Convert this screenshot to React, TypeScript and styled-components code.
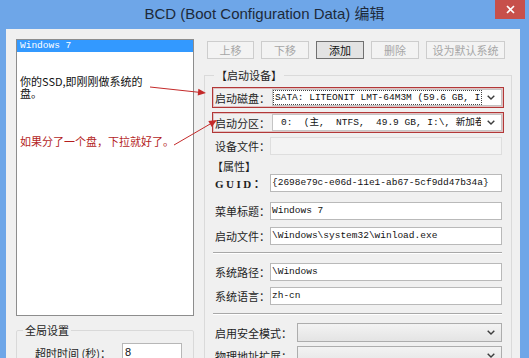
import React from 'react'
import styled, { createGlobalStyle } from 'styled-components'

const GlobalStyle = createGlobalStyle`
  html, body {
    margin: 0;
    padding: 0;
    background: #6ea6e8;
  }
  * {
    box-sizing: border-box;
  }
`

const CJK = `"Noto Sans CJK SC", sans-serif`
const MONO = `"Liberation Mono", "Noto Sans CJK SC", monospace`

export default function App() {
  return (
    <>
      <GlobalStyle />
      <Window>
        <TitleBar>
          <Title>BCD (Boot Configuration Data) 编辑</Title>
          <CloseButton aria-label="关闭">
            <svg width="9" height="9" viewBox="0 0 9 9">
              <path d="M1 1 L8 8 M8 1 L1 8" stroke="#fff" strokeWidth="1.6" />
            </svg>
          </CloseButton>
        </TitleBar>

        <Frame>
          <Body>
            <LeftColumn>
              <ListBox>
                <ListItem>Windows 7</ListItem>
                <Note $mt={24}>
                  你的SSD,即刚刚做系统的
                  <br />
                  盘。
                </Note>
                <Note $mt={37} $red>如果分了一个盘，下拉就好了。</Note>
              </ListBox>

              <GroupBox>
                <GroupLegend>全局设置</GroupLegend>
                <TimeoutRow>
                  <Label $w={87}>超时时间 (秒)：</Label>
                  <SmallInput>8</SmallInput>
                </TimeoutRow>
              </GroupBox>
            </LeftColumn>

            <RightColumn>
              <Toolbar>
                <Button $w={47} disabled>上移</Button>
                <Button $w={48} disabled>下移</Button>
                <Button $w={48} $primary>添加</Button>
                <Button $w={48} disabled>删除</Button>
                <Button $w={79} disabled>设为默认系统</Button>
              </Toolbar>

              <MainGroup>
                <MainLegend>【启动设备】</MainLegend>

                <MarkedRow>
                  <Label $w={57}>启动磁盘：</Label>
                  <Combo>
                    <ComboValue $focused>SATA: LITEONIT LMT-64M3M (59.6 GB, I:\</ComboValue>
                    <Chevron />
                  </Combo>
                </MarkedRow>

                <MarkedRow $mt={4}>
                  <Label $w={57}>启动分区：</Label>
                  <Combo>
                    <ComboValue $indent={7}>0:  (主,  NTFS,  49.9 GB, I:\, 新加卷</ComboValue>
                    <Chevron />
                  </Combo>
                </MarkedRow>

                <FieldRow $mt={3}>
                  <Label $w={55}>设备文件：</Label>
                  <TextBox $readOnly />
                </FieldRow>

                <SectionTitle>【属性】</SectionTitle>

                <FieldRow>
                  <GuidLabel>GUID：</GuidLabel>
                  <TextBox>{'{2698e79c-e06d-11e1-ab67-5cf9dd47b34a}'}</TextBox>
                </FieldRow>

                <FieldRow $mt={9}>
                  <Label $w={55}>菜单标题：</Label>
                  <TextBox>Windows 7</TextBox>
                </FieldRow>

                <FieldRow $mt={6}>
                  <Label $w={55}>启动文件：</Label>
                  <TextBox>\Windows\system32\winload.exe</TextBox>
                </FieldRow>

                <Separator $mt={7} />

                <FieldRow $mt={8}>
                  <Label $w={55}>系统路径：</Label>
                  <TextBox>\Windows</TextBox>
                </FieldRow>

                <FieldRow $mt={5}>
                  <Label $w={55}>系统语言：</Label>
                  <TextBox>zh-cn</TextBox>
                </FieldRow>

                <Separator $mt={8} />

                <FieldRow $mt={8}>
                  <Label $w={82}>启用安全模式：</Label>
                  <Combo $flat>
                    <ComboValue />
                    <Chevron />
                  </Combo>
                </FieldRow>

                <FieldRow $mt={4}>
                  <Label $w={82}>物理地址扩展：</Label>
                  <Combo $flat>
                    <ComboValue />
                    <Chevron />
                  </Combo>
                </FieldRow>
              </MainGroup>
            </RightColumn>
          </Body>
        </Frame>

        <Annotations width="529" height="358" viewBox="0 0 529 358">
          <line x1="150" y1="87" x2="199" y2="92.3" stroke="#c42a2a" strokeWidth="1" />
          <polygon points="206,93 197.7,95.6 198.4,88.7" fill="#c42a2a" />
          <line x1="174" y1="145" x2="211" y2="123.5" stroke="#c42a2a" strokeWidth="1" />
          <polygon points="217,120 211.8,127 208.3,121" fill="#c42a2a" />
        </Annotations>
      </Window>
    </>
  )
}

function Chevron() {
  return (
    <ChevronIcon width="8" height="5" viewBox="0 0 8 5">
      <polyline points="0.7,0.7 4,4 7.3,0.7" fill="none" stroke="#3c3c3c" strokeWidth="1.4" />
    </ChevronIcon>
  )
}

const Window = styled.div`
  position: relative;
  width: 529px;
  height: 358px;
  overflow: hidden;
  display: flex;
  flex-direction: column;
  background: #6ea6e8;
  font-family: ${CJK};
`

const TitleBar = styled.div`
  flex: none;
  height: 29px;
  display: grid;
  grid-template-columns: 1fr auto 1fr;
`

const Title = styled.div`
  grid-column: 2;
  font-family: "Liberation Sans", "Noto Sans CJK SC", sans-serif;
  font-size: 15px;
  line-height: 27px;
  color: #1d2a3a;
  white-space: nowrap;
`

const CloseButton = styled.div`
  grid-column: 3;
  justify-self: end;
  align-self: start;
  display: flex;
  align-items: center;
  justify-content: center;
  width: 30px;
  height: 19px;
  margin-right: 4px;
  background: #c7504b;
`

const Frame = styled.div`
  flex: 1;
  min-height: 0;
  display: flex;
  padding: 0 9px 0 6px;
`

const Body = styled.div`
  flex: 1;
  min-height: 0;
  display: flex;
  padding: 10px 8px 0 10px;
  background: #f0f0f0;
  overflow: hidden;
`

const LeftColumn = styled.div`
  flex: none;
  width: 178px;
  display: flex;
  flex-direction: column;
`

const ListBox = styled.div`
  flex: none;
  height: 277px;
  border: 1px solid #8d8d8d;
  background: #fff;
`

const ListItem = styled.div`
  height: 12px;
  padding-left: 3px;
  background: #3399ff;
  color: #fff;
  font: 9.5px/12px ${MONO};
`

const Note = styled.p<{ $mt: number; $red?: boolean }>`
  margin: ${p => p.$mt}px 0 0;
  padding-left: 3px;
  font-size: 11px;
  line-height: 11.5px;
  color: ${p => (p.$red ? '#b41e1e' : '#111')};
  white-space: nowrap;
`

const GroupBox = styled.fieldset`
  margin: 7px 0 0;
  padding: 0;
  min-width: 0;
  border: 1px solid #d9d9d9;
  border-radius: 2px;
`

const GroupLegend = styled.legend`
  margin-left: 6px;
  padding: 0 2px;
  font-size: 11px;
  line-height: 14px;
  color: #1e1e1e;
`

const TimeoutRow = styled.div`
  display: flex;
  align-items: center;
  height: 19px;
  margin-top: 6px;
  padding-left: 18px;
`

const SmallInput = styled.div`
  width: 60px;
  height: 19px;
  padding-left: 2px;
  border: 1px solid #b7b7b7;
  background: #fff;
  font: 11px/17px "Liberation Sans", sans-serif;
  color: #111;
`

const RightColumn = styled.div`
  flex: none;
  width: 308px;
  margin-left: 10px;
  display: flex;
  flex-direction: column;
`

const Toolbar = styled.div`
  display: flex;
  gap: 7px;
  margin-top: 2px;
  padding-left: 3px;
`

const Button = styled.button<{ $w: number; $primary?: boolean }>`
  width: ${p => p.$w}px;
  height: 18px;
  padding: 0;
  border: 1px solid ${p => (p.$primary ? '#707070' : '#cdcdcd')};
  background: ${p => (p.$primary ? '#e3e3e3' : '#f3f3f3')};
  color: ${p => (p.$primary ? '#111' : '#a6a6a6')};
  font-family: ${CJK};
  font-size: 11px;
  line-height: 16px;
`

const MainGroup = styled.fieldset`
  margin: 9px 0 0;
  padding: 5px 7px 0 7px;
  min-width: 0;
  border: 1px solid #dadada;
`

const MainLegend = styled.legend`
  margin-left: 2px;
  padding: 0 2px;
  font-size: 11px;
  line-height: 14px;
  color: #1e1e1e;
`

const FieldRow = styled.div<{ $mt?: number }>`
  display: flex;
  align-items: center;
  height: 19px;
  margin-top: ${p => p.$mt ?? 0}px;
  padding: 0 2px 0 3px;
`

const MarkedRow = styled(FieldRow)`
  height: 21px;
  padding: 0 1px 0 2px;
  border: 1px solid #b23737;
  box-shadow: inset 0 0 0 1px rgba(178, 55, 55, 0.25);
`

const Label = styled.span<{ $w: number }>`
  flex: none;
  width: ${p => p.$w}px;
  font-size: 11px;
  color: #1e1e1e;
  white-space: nowrap;
`

const GuidLabel = styled.span`
  flex: none;
  width: 55px;
  font-family: "Liberation Serif", "Noto Sans CJK SC", serif;
  font-weight: bold;
  font-size: 11px;
  letter-spacing: 2.5px;
  color: #1e1e1e;
  white-space: nowrap;
  overflow: hidden;
`

const TextBox = styled.div<{ $readOnly?: boolean }>`
  flex: 1;
  min-width: 0;
  height: 18px;
  padding-left: 1px;
  border: 1px solid ${p => (p.$readOnly ? '#dedede' : '#b9b9b9')};
  background: ${p => (p.$readOnly ? '#f3f3f3' : '#fff')};
  color: #111;
  font: 9.5px/16px ${MONO};
  white-space: pre;
  overflow: hidden;
`

const Combo = styled.div<{ $flat?: boolean }>`
  flex: 1;
  min-width: 0;
  display: flex;
  align-items: center;
  height: ${p => (p.$flat ? 19 : 17)}px;
  padding: 1px 6px 1px 1px;
  border: 1px solid ${p => (p.$flat ? '#adadad' : '#c4c4c4')};
  background: ${p => (p.$flat ? 'linear-gradient(#f3f3f3, #e4e4e4)' : '#fff')};
`

const ComboValue = styled.span<{ $focused?: boolean; $indent?: number }>`
  flex: 1;
  min-width: 0;
  height: 13px;
  margin-right: 6px;
  padding-left: ${p => p.$indent ?? 1}px;
  outline: ${p => (p.$focused ? '1px dotted #444' : 'none')};
  color: #111;
  font: 9.5px/13px ${MONO};
  white-space: pre;
  overflow: hidden;
`

const ChevronIcon = styled.svg`
  flex: none;
`

const SectionTitle = styled.div`
  height: 13px;
  margin-top: 5px;
  font-size: 11px;
  line-height: 13px;
  color: #1e1e1e;
`

const Separator = styled.hr<{ $mt: number }>`
  height: 0;
  margin: ${p => p.$mt}px 2px 0 1px;
  border: 0;
  border-top: 1px solid #a8a8a8;
  border-bottom: 1px solid #fff;
`

const Annotations = styled.svg`
  position: absolute;
  top: 0;
  left: 0;
  pointer-events: none;
`
